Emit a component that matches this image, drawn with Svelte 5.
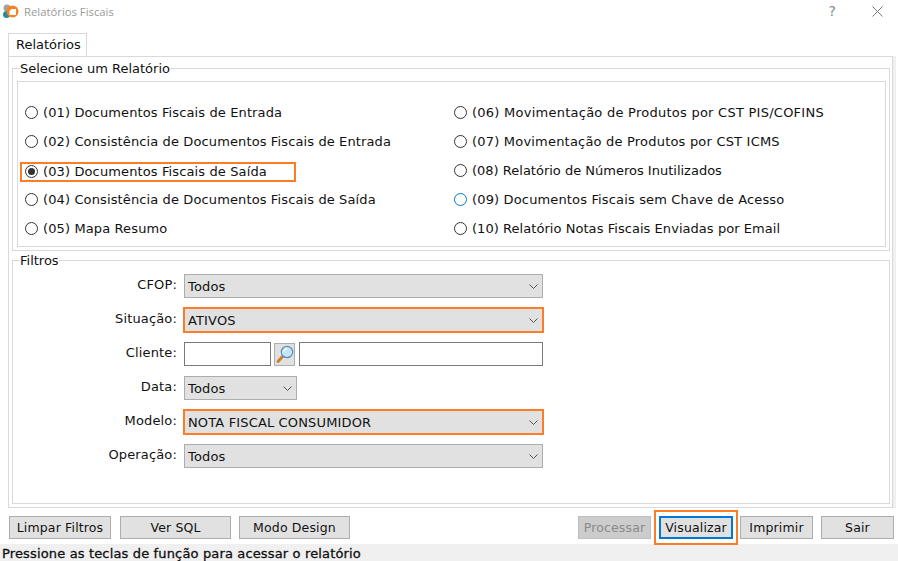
<script>
	const left = [
		{ text: "(01) Documentos Fiscais de Entrada", track: 0.12 },
		{ text: "(02) Consistência de Documentos Fiscais de Entrada", track: 0.12 },
		{ text: "(03) Documentos Fiscais de Saída", track: 0.12, checked: true, marked: true },
		{ text: "(04) Consistência de Documentos Fiscais de Saída", track: 0.12 },
		{ text: "(05) Mapa Resumo", track: 0.12 },
	];
	const right = [
		{ text: "(06) Movimentação de Produtos por CST PIS/COFINS", track: 0.25 },
		{ text: "(07) Movimentação de Produtos por CST ICMS", track: 0.2 },
		{ text: "(08) Relatório de Números Inutilizados", track: 0 },
		{ text: "(09) Documentos Fiscais sem Chave de Acesso", track: 0.15, hover: true },
		{ text: "(10) Relatório Notas Fiscais Enviadas por Email", track: 0.05 },
	];
	const reports = [left, right];
</script>

{#snippet chevron()}
	<svg class="chevron" width="9" height="5" viewBox="0 0 9 5"><path d="M0.5 0.5 L4.5 4.5 L8.5 0.5" fill="none" stroke="#555" stroke-width="1" /></svg>
{/snippet}

{#snippet select(value, cls)}
	<div class="select {cls}"><span>{value}</span>{@render chevron()}</div>
{/snippet}

<main class="window">
	<header class="titlebar">
		<svg class="logo" width="16" height="16" viewBox="0 0 16 16">
			<circle cx="4" cy="5" r="3.5" fill="#a3a3a3" />
			<circle cx="3.5" cy="11.5" r="3.5" fill="#1f8ea3" />
			<circle cx="9.5" cy="8.5" r="6" fill="#f58220" />
			<path d="M6.5 8 L8.5 6 H13 V12 H6.5 Z" fill="#fff" />
		</svg>
		<span class="title">Relatórios Fiscais</span>
		<span class="help">?</span>
		<svg class="close" width="11" height="11" viewBox="0 0 11 11"><path d="M0.5 0.5 L10.5 10.5 M10.5 0.5 L0.5 10.5" stroke="#777" stroke-width="1" /></svg>
	</header>

	<div class="tabs"><div class="tab">Relatórios</div></div>

	<section class="panel">
		<fieldset class="group reports">
			<legend>Selecione um Relatório</legend>
			<div class="inner">
				{#each reports as col}
					<div class="col">
						{#each col as r}
							<div class="radio" class:marked={r.marked}>
								<span class="dot" class:checked={r.checked} class:hover={r.hover}></span>
								<span style:letter-spacing="{r.track}px">{r.text}</span>
							</div>
						{/each}
					</div>
				{/each}
			</div>
		</fieldset>

		<fieldset class="group filters">
			<legend>Filtros</legend>
			<div class="form">
				<label>CFOP:</label>
				{@render select("Todos", "wide")}
				<label>Situação:</label>
				{@render select("ATIVOS", "wide marked")}
				<label>Cliente:</label>
				<div class="client">
					<input class="code" />
					<button class="search" aria-label="Buscar">
						<svg width="19" height="20" viewBox="0 0 19 20">
							<path d="M8 12 L3 17.5" stroke="#c9802e" stroke-width="3" stroke-linecap="round" />
							<circle cx="12" cy="8" r="5.7" fill="#c5e4f7" stroke="#5b8fb8" stroke-width="1.2" />
							<path d="M9 7.5 A3.2 3.2 0 0 1 12 4.7" fill="none" stroke="#fff" stroke-width="1.4" />
						</svg>
					</button>
					<input class="name" />
				</div>
				<label>Data:</label>
				{@render select("Todos", "short")}
				<label>Modelo:</label>
				{@render select("NOTA FISCAL CONSUMIDOR", "wide marked")}
				<label>Operação:</label>
				{@render select("Todos", "wide")}
			</div>
		</fieldset>
	</section>

	<div class="actions">
		<button class="btn limpar">Limpar Filtros</button>
		<button class="btn sql">Ver SQL</button>
		<button class="btn design">Modo Design</button>
		<div class="spacer"></div>
		<button class="btn proc" disabled>Processar</button>
		<div class="frame"><button class="btn vis">Visualizar</button></div>
		<button class="btn imp">Imprimir</button>
		<button class="btn sair">Sair</button>
	</div>

	<footer class="status">Pressione as teclas de função para acessar o relatório</footer>
</main>

<style>
	:global(body) {
		margin: 0;
		background: #fff;
	}
	.window {
		width: 898px;
		height: 561px;
		overflow: hidden;
		display: flex;
		flex-direction: column;
		font-family: "DejaVu Sans", Verdana, sans-serif;
		font-size: 13px;
		letter-spacing: 0.15px;
		color: #111;
		background: #fff;
	}
	.titlebar {
		height: 33px;
		flex: none;
		display: flex;
		align-items: center;
		padding: 0 15px 11px 3px;
		box-sizing: border-box;
	}
	.title {
		margin-left: 5px;
		color: #9a9a9a;
		font-size: 11.3px;
		letter-spacing: 0;
		font-family: "Open Sans", sans-serif;
	}
	.help {
		margin-left: auto;
		margin-right: 36px;
		color: #888;
		font-size: 14px;
	}
	.tabs {
		height: 23px;
		flex: none;
		padding-left: 8px;
		display: flex;
	}
	.tab {
		width: 79px;
		box-sizing: border-box;
		border: 1px solid #d9d9d9;
		border-bottom: none;
		padding: 3px 0 0 7px;
		letter-spacing: 0;
	}
	.panel {
		margin-left: 8px;
		width: 885px;
		height: 452px;
		flex: none;
		box-sizing: border-box;
		border: 1px solid #d9d9d9;
		padding: 2px 2px 3px 3px;
		display: flex;
		flex-direction: column;
		box-shadow: 3px 0 0 #f0f0f0;
	}
	.group {
		margin: 0;
		padding: 0 3px 3px 4px;
		border: 1px solid #d9d9d9;
		min-width: 0;
		box-sizing: border-box;
	}
	legend {
		margin-left: 3px;
		padding: 2px 0 0;
		line-height: 16px;
		letter-spacing: 0;
	}
	.inner {
		margin-top: 4px;
		height: 166px;
		box-sizing: border-box;
		border: 1px solid #d9d9d9;
		padding: 16px 0 0 7px;
		display: grid;
		grid-template-columns: 429px 1fr;
	}
	.radio {
		height: 29px;
		display: flex;
		align-items: center;
		gap: 5px;
		white-space: nowrap;
		box-sizing: border-box;
	}
	.radio.marked {
		height: 20px;
		width: 276px;
		margin: 6px 0 3px -5px;
		padding: 0 0 1px 3px;
		border: 2px solid #fb7d26;
	}
	.dot {
		width: 13px;
		height: 13px;
		box-sizing: border-box;
		border: 1px solid #333;
		border-radius: 50%;
		background: #fff;
		flex: none;
		display: flex;
		align-items: center;
		justify-content: center;
	}
	.dot.hover {
		border-color: #0078d7;
	}
	.dot.checked::after {
		content: "";
		width: 7px;
		height: 7px;
		border-radius: 50%;
		background: #333;
	}
	.filters {
		flex: 1;
		min-height: 0;
	}
	.form {
		display: grid;
		grid-template-columns: 160px auto;
		grid-auto-rows: 24px;
		row-gap: 10px;
		column-gap: 7px;
		align-items: center;
		justify-content: start;
		margin-top: 5px;
	}
	label {
		text-align: right;
		padding-bottom: 3px;
	}
	.select {
		height: 24px;
		box-sizing: border-box;
		border: 1px solid #adadad;
		background: #e1e1e1;
		display: flex;
		align-items: center;
		justify-content: space-between;
		padding: 0 4px 0 3px;
	}
	.select.wide {
		width: 359px;
	}
	.select.short {
		width: 113px;
	}
	.select.marked {
		outline: 2px solid #fb7d26;
		outline-offset: -1px;
		border-color: transparent;
	}
	.chevron {
		flex: none;
	}
	.client {
		display: flex;
		align-items: center;
		width: 359px;
		height: 24px;
		gap: 3px;
	}
	input {
		margin: 0;
		padding: 0;
		height: 24px;
		box-sizing: border-box;
		border: 1px solid #7a7a7a;
		background: #fff;
		outline: none;
	}
	.code {
		width: 87px;
	}
	.name {
		width: 244px;
		margin-left: 1px;
	}
	.search {
		width: 21px;
		height: 23px;
		padding: 0;
		box-sizing: border-box;
		border: 1px solid #adadad;
		background: #e1e1e1;
		display: flex;
		align-items: center;
		justify-content: center;
	}
	.actions {
		height: 36px;
		flex: none;
		box-sizing: border-box;
		display: flex;
		align-items: center;
		padding: 3px 4px 0 9px;
	}
	.btn {
		height: 23px;
		flex: none;
		margin: 0;
		padding: 0;
		box-sizing: border-box;
		border: 1px solid #adadad;
		background: #e1e1e1;
		font: inherit;
		font-size: 12.5px;
		letter-spacing: 0.15px;
		color: #111;
	}
	.limpar {
		width: 102px;
		margin-right: 9px;
	}
	.sql {
		width: 111px;
		margin-right: 8px;
	}
	.design {
		width: 111px;
	}
	.spacer {
		flex: 1;
	}
	.proc {
		width: 73px;
		background: #cccccc;
		border-color: #bfbfbf;
		color: #8a8a8a;
	}
	.frame {
		margin: -1px 2px -1px 3px;
		width: 84px;
		height: 35px;
		flex: none;
		box-sizing: border-box;
		border: 2px solid #fb7d26;
		display: flex;
		align-items: center;
		justify-content: center;
		position: relative;
	}
	.vis {
		width: 74px;
		border: 2px solid #0078d7;
	}
	.imp {
		width: 73px;
		margin-right: 8px;
	}
	.sair {
		width: 73px;
	}
	.status {
		flex: 1;
		background: #f0f0f0;
		padding: 3px 0 0 2px;
		line-height: 14px;
		letter-spacing: 0.15px;
		-webkit-text-stroke: 0.3px #111;
	}
</style>
